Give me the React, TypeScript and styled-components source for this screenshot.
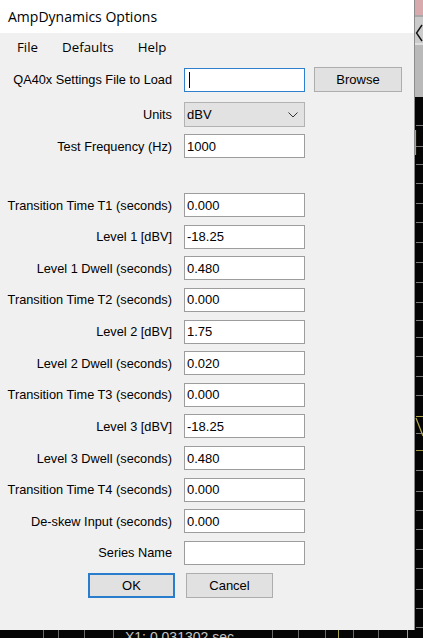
import React from 'react';
import styled, { createGlobalStyle } from 'styled-components';

const GlobalStyle = createGlobalStyle`
  html, body {
    margin: 0;
    padding: 0;
    background: #050505;
  }
  body {
    width: 423px;
    height: 638px;
    overflow: hidden;
  }
`;

const Screen = styled.div`
  display: grid;
  grid-template-columns: 415px 8px;
  grid-template-rows: 630px 8px;
  width: 423px;
  height: 638px;
  background: #050505;
  overflow: hidden;
`;

const Dialog = styled.div`
  grid-column: 1;
  grid-row: 1;
  display: flex;
  flex-direction: column;
  box-sizing: border-box;
  background: #f0f0f0;
  border-right: 1px solid #8c8c8c;
`;

const TitleBar = styled.div`
  height: 33px;
  display: flex;
  align-items: center;
  padding-left: 8px;
  background: #fff;
  font-family: 'Open Sans', sans-serif;
  font-size: 14px;
  color: #000;
`;

const MenuBar = styled.div`
  height: 28px;
  display: flex;
  align-items: center;
  padding-left: 5px;
  font-family: 'Open Sans', sans-serif;
  font-size: 13.3px;
  color: #000;
`;

const MenuItem = styled.span`
  padding: 0 12px;
`;

const Form = styled.div`
  display: flex;
  flex-direction: column;
  padding-top: 6px;
`;

const Row = styled.div<{ $top: number; $h?: number }>`
  display: grid;
  grid-template-columns: 184px 121px auto;
  align-items: center;
  height: ${p => p.$h ?? 24}px;
  margin-top: ${p => p.$top}px;
`;

const Label = styled.label`
  padding-right: 12px;
  text-align: right;
  white-space: nowrap;
  font-family: 'Liberation Sans', Arial, sans-serif;
  font-size: 12.75px;
  color: #000;
`;

const TextBox = styled.div<{ $focused?: boolean }>`
  box-sizing: border-box;
  height: 24px;
  display: flex;
  align-items: center;
  padding-left: 2px;
  background: #fff;
  border: 1px solid ${p => (p.$focused ? '#2f7fcf' : '#9d9d9d')};
  font-family: 'Liberation Sans', Arial, sans-serif;
  font-size: 13px;
  color: #000;
`;

const Caret = styled.span`
  width: 1px;
  height: 16px;
  margin-left: 2px;
  background: #000;
`;

const Select = styled.div`
  box-sizing: border-box;
  height: 25px;
  display: flex;
  align-items: center;
  justify-content: space-between;
  padding: 0 6px 0 2px;
  background: #e2e2e2;
  border: 1px solid #b2b2b2;
  font-family: 'Liberation Sans', Arial, sans-serif;
  font-size: 13px;
  color: #000;
`;

const Button = styled.button<{ $default?: boolean }>`
  box-sizing: border-box;
  width: 87px;
  height: 25px;
  margin: 0;
  padding: 0;
  background: #e1e1e1;
  border: ${p => (p.$default ? '2px solid #2a7dcc' : '1px solid #adadad')};
  border-radius: 0;
  font-family: 'Liberation Sans', Arial, sans-serif;
  font-size: 13px;
  color: #000;
`;

const BrowseButton = styled(Button)`
  width: 88px;
  margin-left: 9px;
`;

const ButtonRow = styled.div`
  display: flex;
  gap: 11px;
  padding-left: 88px;
  margin-top: 7.64px;
`;

const RightStrip = styled.div`
  grid-column: 2;
  grid-row: 1 / span 2;
  display: flex;
  flex-direction: column;
  background: #050505;
`;

const PinkCap = styled.div`
  height: 15px;
  background: #d8aaad;
  border-bottom: 2px solid #a9a9a9;
`;

const CloseArea = styled.div`
  height: 26px;
  background: #cbcbcb;
  border-bottom: 2px solid #dedede;
`;

const GrayPane = styled.div`
  height: 54px;
  background: #b9b9b9;
`;

const Plot = styled.div`
  flex: 1;
  display: flex;
`;

const BottomStrip = styled.div`
  grid-column: 1;
  grid-row: 2;
  display: grid;
  overflow: hidden;
  background: #050505;
  & > * {
    grid-area: 1 / 1;
  }
`;

const Readout = styled.span`
  padding-left: 125px;
  font-family: 'Liberation Sans', Arial, sans-serif;
  font-size: 14px;
  line-height: 14px;
  color: #c4c4c4;
  white-space: nowrap;
`;

const topFields = [
  { label: 'Transition Time T1 (seconds)', value: '0.000' },
  { label: 'Level 1 [dBV]', value: '-18.25' },
  { label: 'Level 1 Dwell (seconds)', value: '0.480' },
  { label: 'Transition Time T2 (seconds)', value: '0.000' },
  { label: 'Level 2 [dBV]', value: '1.75' },
  { label: 'Level 2 Dwell (seconds)', value: '0.020' },
  { label: 'Transition Time T3 (seconds)', value: '0.000' },
  { label: 'Level 3 [dBV]', value: '-18.25' },
  { label: 'Level 3 Dwell (seconds)', value: '0.480' },
  { label: 'Transition Time T4 (seconds)', value: '0.000' },
  { label: 'De-skew Input (seconds)', value: '0.000' },
  { label: 'Series Name', value: '' },
];

// tick rows on the plot edge behind the dialog, in page y
const plotTicks = [
  125, 146, 164, 183, 203, 222, 242, 262, 282, 302, 320, 337, 356, 376, 395, 416, 433, 450,
  470, 491, 510, 529, 549, 568, 589, 608, 627,
];
const PLOT_TOP = 97;

const bottomTicks = [
  { x: 43, c: '#6a6a6a' },
  { x: 58, c: '#6a6a6a' },
  { x: 84, c: '#6a6a6a' },
  { x: 113, c: '#6a6a6a' },
  { x: 272, c: '#6a6a6a' },
  { x: 298, c: '#6a6a6a' },
  { x: 325, c: '#6a6a6a' },
  { x: 338, c: '#a8a24a' },
  { x: 353, c: '#6a6a6a' },
  { x: 378, c: '#6a6a6a' },
  { x: 407, c: '#a8a24a' },
];

const Chevron = () => (
  <svg width="10" height="6" viewBox="0 0 10 6">
    <polyline points="0.5,0.5 5,5 9.5,0.5" fill="none" stroke="#333" strokeWidth="1" />
  </svg>
);

const App: React.FC = () => {
  return (
    <>
      <GlobalStyle />
      <Screen>
        <Dialog>
          <TitleBar>AmpDynamics Options</TitleBar>
          <MenuBar>
            <MenuItem>File</MenuItem>
            <MenuItem>Defaults</MenuItem>
            <MenuItem>Help</MenuItem>
          </MenuBar>
          <Form>
            <Row $top={0}>
              <Label>QA40x Settings File to Load</Label>
              <TextBox $focused>
                <Caret />
              </TextBox>
              <BrowseButton>Browse</BrowseButton>
            </Row>
            <Row $top={11} $h={25}>
              <Label>Units</Label>
              <Select>
                <span>dBV</span>
                <Chevron />
              </Select>
            </Row>
            <Row $top={7}>
              <Label>Test Frequency (Hz)</Label>
              <TextBox>1000</TextBox>
            </Row>
            {topFields.map((f, i) => (
              <Row key={f.label} $top={i === 0 ? 35 : 7.64}>
                <Label>{f.label}</Label>
                <TextBox>{f.value}</TextBox>
              </Row>
            ))}
            <ButtonRow>
              <Button $default>OK</Button>
              <Button>Cancel</Button>
            </ButtonRow>
          </Form>
        </Dialog>

        <RightStrip>
          <PinkCap />
          <CloseArea>
            <svg width="8" height="26" viewBox="0 0 8 26">
              <polyline points="7,8 1.5,16 7,24" fill="none" stroke="#111" strokeWidth="1.4" />
            </svg>
          </CloseArea>
          <GrayPane />
          <Plot>
            <svg width="8" height={638 - PLOT_TOP} viewBox={`0 0 8 ${638 - PLOT_TOP}`}>
              {plotTicks.map(y => (
                <line key={y} x1="1" x2="8" y1={y - PLOT_TOP + 0.5} y2={y - PLOT_TOP + 0.5} stroke="#7a7a7a" strokeWidth="1" />
              ))}
              <line x1="0.5" x2="0.5" y1={130 - PLOT_TOP} y2={155 - PLOT_TOP} stroke="#b3ab4c" strokeWidth="1.2" />
              <line x1="1" x2="8" y1={416.5 - PLOT_TOP} y2={416.5 - PLOT_TOP} stroke="#b3ab4c" strokeWidth="1" />
              <line x1="1" x2="8" y1={418 - PLOT_TOP} y2={436 - PLOT_TOP} stroke="#b3ab4c" strokeWidth="1.2" />
              <line x1="1" x2="8" y1={450.5 - PLOT_TOP} y2={450.5 - PLOT_TOP} stroke="#9c9546" strokeWidth="1" />
            </svg>
          </Plot>
        </RightStrip>

        <BottomStrip>
          <svg width="415" height="8" viewBox="0 0 415 8">
            {bottomTicks.map(t => (
              <line key={t.x} x1={t.x + 0.5} x2={t.x + 0.5} y1="0" y2="8" stroke={t.c} strokeWidth="1" />
            ))}
          </svg>
          <Readout>X1: 0.031302 sec</Readout>
        </BottomStrip>
      </Screen>
    </>
  );
};

export default App;
